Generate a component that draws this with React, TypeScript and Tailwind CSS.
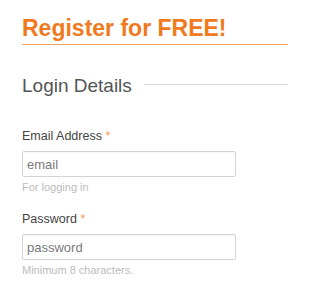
const Field = ({ label, placeholder, hint, type, className }: { label: string; placeholder: string; hint: string; type: string; className: string }) => (
    <div className={className}>
        <label className="block text-[12.5px] leading-[16px] text-[#444]">
            {label} <span className="text-[#f39a4c]">*</span>
        </label>
        <input
            type={type}
            placeholder={placeholder}
            className="mt-[7px] block w-full h-[26px] border border-[#d4d4d4] rounded-[2px] pl-[4px] text-[13px] text-[#555] placeholder:text-[#7a7a7a] shadow-[inset_0_1px_1px_rgba(0,0,0,0.04)] outline-none"
        />
        <p className="mt-[3px] text-[11px] leading-[14px] text-[#bcbcbc]">{hint}</p>
    </div>
);

const App = () => {
    return (
        <div className="w-[288px] h-[288px] overflow-hidden bg-white pl-[22px] font-['Liberation_Sans',Arial,sans-serif]">
            <h1 className="pt-[14px] pb-[2px] text-[23px] leading-[28px] font-bold text-[#f07a1e] border-b border-[#f2a466]">
                Register for FREE!
            </h1>

            <div className="mt-[30px] flex items-start gap-[12px]">
                <h2 className="text-[19px] leading-[22px] text-[#555]">Login Details</h2>
                <div className="flex-1 h-px mt-[9px] bg-[#d8d8d8]" />
            </div>

            <div className="pr-[52px]">
                <Field className="mt-[31px]" label="Email Address" placeholder="email" hint="For logging in" type="email" />
                <Field className="mt-[17px]" label="Password" placeholder="password" hint="Minimum 8 characters." type="password" />
            </div>
        </div>
    );
};

export default App;
